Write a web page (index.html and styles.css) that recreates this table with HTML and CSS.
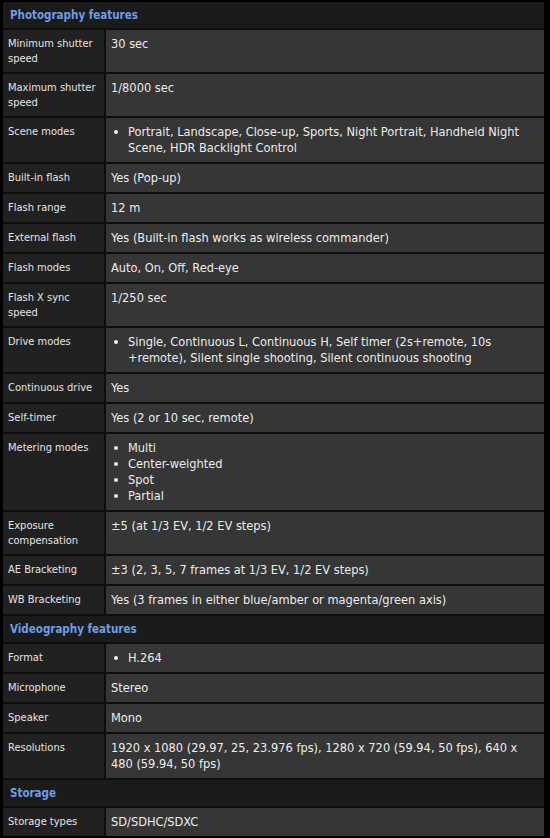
FILE: index.html
```html
<!DOCTYPE html>
<html lang="en">
<head>
<meta charset="utf-8">
<title>Specifications</title>
<link rel="stylesheet" href="styles.css">
</head>
<body>
<div class="specs">
  <div class="section">Photography features</div>

  <div class="label">Minimum shutter speed</div>
  <div class="value">30 sec</div>

  <div class="label">Maximum shutter speed</div>
  <div class="value">1/8000 sec</div>

  <div class="label">Scene modes</div>
  <div class="value"><ul class="bullets"><li>Portrait, Landscape, Close-up, Sports, Night Portrait, Handheld Night Scene, HDR Backlight Control</li></ul></div>

  <div class="label">Built-in flash</div>
  <div class="value">Yes (Pop-up)</div>

  <div class="label">Flash range</div>
  <div class="value">12 m</div>

  <div class="label">External flash</div>
  <div class="value">Yes (Built-in flash works as wireless commander)</div>

  <div class="label">Flash modes</div>
  <div class="value">Auto, On, Off, Red-eye</div>

  <div class="label">Flash X sync speed</div>
  <div class="value">1/250 sec</div>

  <div class="label">Drive modes</div>
  <div class="value"><ul class="bullets"><li>Single, Continuous L, Continuous H, Self timer (2s+remote, 10s<wbr>+remote), Silent single shooting, Silent continuous shooting</li></ul></div>

  <div class="label">Continuous drive</div>
  <div class="value">Yes</div>

  <div class="label">Self-timer</div>
  <div class="value">Yes (2 or 10 sec, remote)</div>

  <div class="label">Metering modes</div>
  <div class="value"><ul class="bullets"><li>Multi</li><li>Center-weighted</li><li>Spot</li><li>Partial</li></ul></div>

  <div class="label">Exposure compensation</div>
  <div class="value">±5 (at 1/3 EV, 1/2 EV steps)</div>

  <div class="label">AE Bracketing</div>
  <div class="value">±3 (2, 3, 5, 7 frames at 1/3 EV, 1/2 EV steps)</div>

  <div class="label">WB Bracketing</div>
  <div class="value">Yes (3 frames in either blue/amber or magenta/green axis)</div>

  <div class="section">Videography features</div>

  <div class="label">Format</div>
  <div class="value"><ul class="bullets"><li>H.264</li></ul></div>

  <div class="label">Microphone</div>
  <div class="value">Stereo</div>

  <div class="label">Speaker</div>
  <div class="value">Mono</div>

  <div class="label">Resolutions</div>
  <div class="value">1920 x 1080 (29.97, 25, 23.976 fps), 1280 x 720 (59.94, 50 fps), 640 x 480 (59.94, 50 fps)</div>

  <div class="section">Storage</div>

  <div class="label">Storage types</div>
  <div class="value">SD/SDHC/SDXC</div>
</div>
</body>
</html>
```

FILE: styles.css
```css
html, body {
  margin: 0;
  padding: 0;
  background: #000;
}

body {
  font-family: "DejaVu Sans Condensed", "DejaVu Sans", sans-serif;
  font-stretch: semi-condensed;
}

.specs {
  display: grid;
  grid-template-columns: 101px 438px;
  gap: 2px;
  margin: 2px 0 0 3px;
  width: 541px;
  background: #0e0e0e;
}

.section {
  grid-column: 1 / -1;
  background: #1b1b1b;
  color: #709de4;
  font-weight: bold;
  font-size: 11.5px;
  line-height: 16px;
  padding: 5px 7px;
}

.label {
  background: #212121;
  color: #e4e4e4;
  font-size: 11px;
  line-height: 15px;
  padding: 6px 5px;
}

.value {
  background: #363636;
  color: #ececec;
  font-size: 12.7px;
  line-height: 16px;
  padding: 6px 5px;
}

.bullets {
  list-style: none;
  margin: 0;
  padding: 0;
}

.bullets li {
  display: flex;
  align-items: flex-start;
}

.bullets li::before {
  content: "";
  flex: 0 0 4px;
  width: 4px;
  height: 4px;
  border-radius: 50%;
  background: #f0f0f0;
  margin: 6px 10px 0 3px;
}
```
